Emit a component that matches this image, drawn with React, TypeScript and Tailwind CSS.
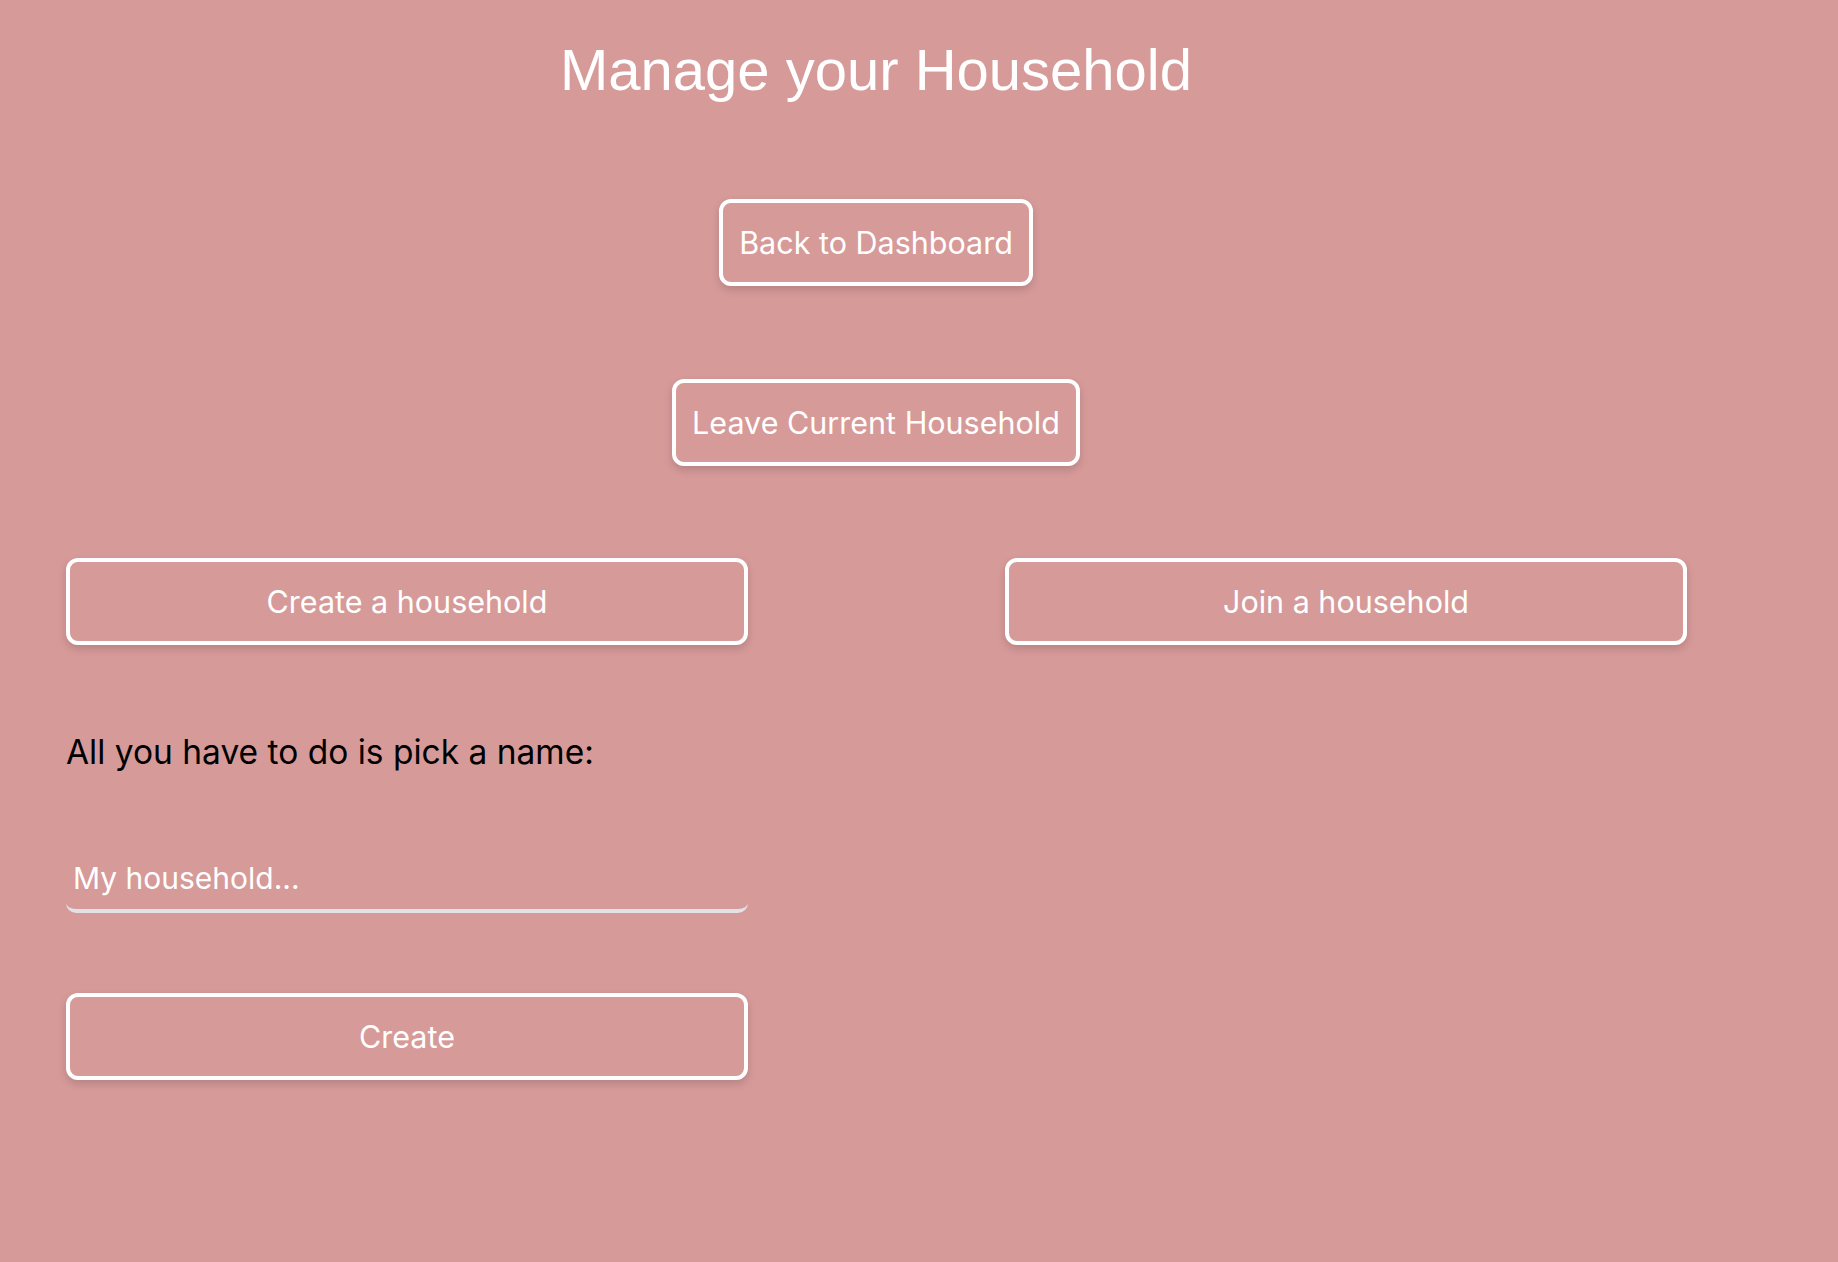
import React from "react";

const btn =
  "flex items-center justify-center h-[87px] px-[16px] border-4 border-white rounded-[12px] text-white text-[30.5px] shadow-[0_4px_8px_rgba(0,0,0,0.15)] bg-transparent";

export default function App() {
  return (
    <div
      className="min-h-[1262px] w-full bg-[#d69a99] flex flex-col"
      style={{ fontFamily: "Inter, 'Noto Sans', sans-serif" }}
    >
      <div className="w-[1752px] flex flex-col items-center">
        <h1
          className="pt-[36px] text-white text-[58px] leading-[67px] font-normal"
          style={{ fontFamily: "'Liberation Sans', Arial, sans-serif" }}
        >
          Manage your Household
        </h1>
        <button className={btn + " mt-[96px]"}>Back to Dashboard</button>
        <button className={btn + " mt-[93px]"}>Leave Current Household</button>
      </div>
      <div className="mt-[92px] pl-[66px] grid grid-cols-[682px_682px] gap-x-[257px]">
        <div className="flex flex-col">
          <button className={btn + " w-full"}>Create a household</button>
          <p className="mt-[87px] text-black text-[33.5px] leading-[41px]">
            All you have to do is pick a name:
          </p>
          <input
            className="mt-[79px] h-[61px] w-full bg-transparent border-0 border-b-4 border-[#e1e1e7] rounded-[10px] pl-[7px] pb-[6px] text-white text-[30px] placeholder:text-white outline-none"
            placeholder="My household..."
          />
          <button className={btn + " w-full mt-[80px]"}>Create</button>
        </div>
        <div className="flex flex-col">
          <button className={btn + " w-full"}>Join a household</button>
        </div>
      </div>
    </div>
  );
}
